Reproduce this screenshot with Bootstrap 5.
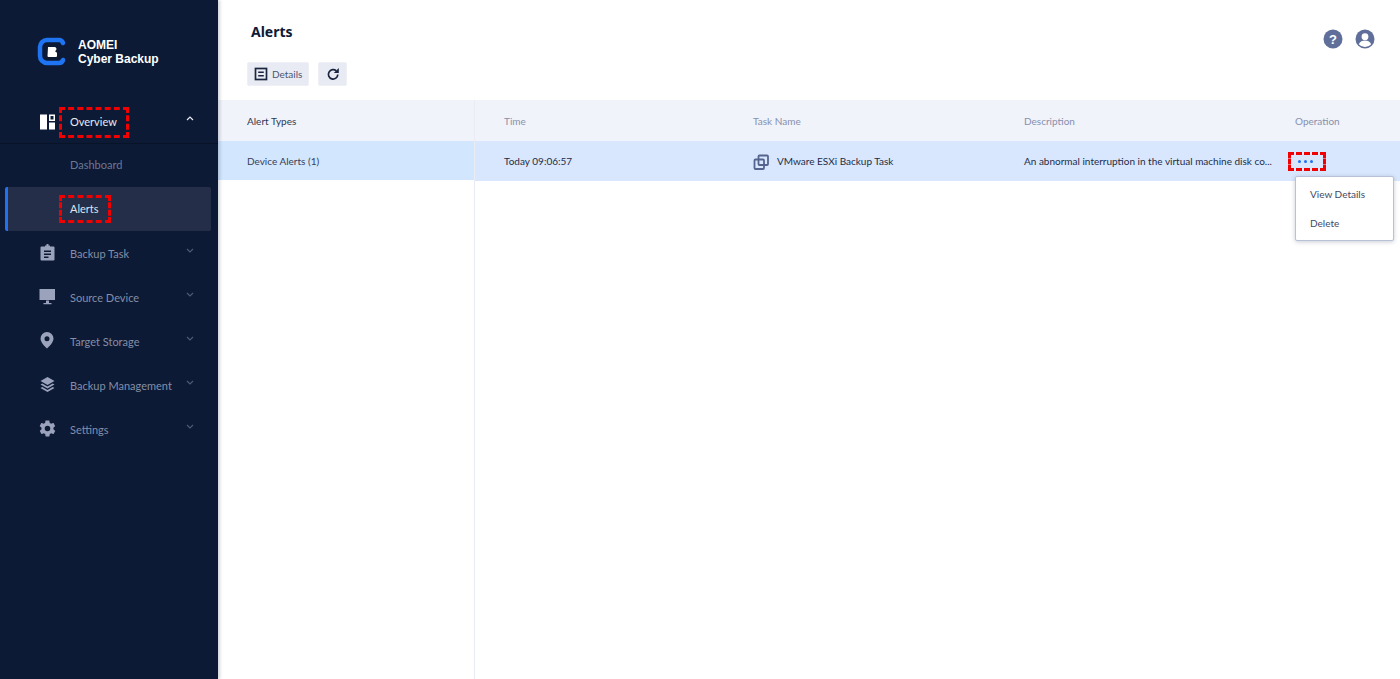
<!DOCTYPE html>
<html lang="en">
<head>
<meta charset="utf-8">
<title>Alerts</title>
<link href="https://cdn.jsdelivr.net/npm/bootstrap@5.3.0/dist/css/bootstrap.min.css" rel="stylesheet">
<style>
html,body{height:679px;overflow:hidden}
body{font-family:"Lato","Open Sans",sans-serif;font-size:11px;color:#1d2740;background:#fff}
.app-frame{height:679px}
.side-bar{width:218px;flex:none;background:#0c1a36;color:#858ea6;box-shadow:2px 0 3px rgba(12,26,54,.18);position:relative;z-index:2}
.brand-box{height:100px;padding:37px 0 0 37px;gap:12px}
.brand-text{font-family:"Liberation Sans",sans-serif;font-weight:700;font-size:12px;line-height:14px;color:#fff;padding-top:1px}
.nav-row{height:44px;padding:0 24px 0 40px;font-size:11px;color:#858ea6}
.nav-row>span{padding-top:2px}
.nav-row.is-open{height:43px;color:#e8ebf2;box-shadow:0 1px 0 rgba(0,0,0,.25)}
.nav-ico{width:15px;height:18px;flex:none;margin-right:15px;fill:#9aa3bb;overflow:visible}
.is-open .nav-ico{fill:#fff}
.nav-gear{width:19px;height:19px;margin:-2px 13px 0 -2px}
.nav-chev{width:8px;height:5px;fill:none;stroke:currentColor;stroke-width:1.2;position:relative;top:-3px;opacity:.55}
.is-open .nav-chev{opacity:1}
.sub-row{height:44px;padding-left:70px;padding-top:1px;color:#6f7890;font-size:11px}
.sub-row.is-current{margin:0 7px 0 5px;padding-left:62px;background:#252e48;color:#dfe3ec;border-left:3px solid #2272f0;border-radius:2px}
.mark-box{position:relative}
.mark-box::after{content:"";position:absolute;border:3px dashed #f00000;pointer-events:none}
.mk-over::after{left:-11px;right:-12px;top:-5px;bottom:-7px}
.mk-alerts::after{left:-11px;right:-12px;top:-6px;bottom:-5px}
.page-head{height:100px;padding:23px 26px 0 29px;position:relative}
.page-title{font-size:14px;font-weight:700;color:#0c1a36;line-height:17px;margin:0 0 0 4px;font-family:"Noto Sans",sans-serif}
.tool-row{margin-top:22px;gap:9px}
.tool-btn{height:24px;background:#e8ebf3;border:1px solid #eef0f6;border-radius:2px;color:#4b5572;font-size:10px;padding:0 6px;--bs-btn-hover-bg:#e8ebf3;gap:4px}
.tool-btn svg{width:14px;height:14px;flex:none}
.tool-sq{width:29px;justify-content:center}
.head-ico{position:absolute;top:29px;right:25px;gap:12px}
.head-ico svg{width:20px;height:20px;display:block}
.types-col{width:257px;flex:none;border-right:1px solid #e9ecf3}
.head-cell{height:41px;background:#f0f3fa;padding:2px 0 0 29px;color:#2f3750;font-size:10px}
.type-sel{height:39px;background:#d2e6fe;padding:2px 0 0 29px;color:#364059;font-size:10px}
.grid-head{height:41px;background:#f0f3fa;color:#8790ad;font-size:10px;padding-top:2px}
.grid-line{height:40px;background:#d8e7fd;color:#232c47;font-size:10px;position:relative;padding-top:1px}
.c-time{width:278px;padding-left:29px;flex:none}
.c-task{width:271px;flex:none}
.c-desc{width:271px;flex:none;white-space:nowrap}
.task-ico{width:16px;height:16px;margin-right:8px;flex:none}
.more-dots{gap:3px;margin-left:3px}
.more-dots i{width:3px;height:3px;border-radius:50%;background:#2272f0;display:block}
.mk-dots{width:30px;height:12px}
.mk-dots::after{left:-7px;right:-1px;top:-4px;bottom:-3px}
.op-menu{position:absolute;top:76px;left:820px;width:99px;height:65px;background:#fff;border:1px solid #b9c1d6;border-radius:2px;box-shadow:0 1px 4px rgba(40,55,90,.25);padding:3px 0;z-index:3;color:#3f4965;font-size:10px}
.op-menu div{height:29px;padding-left:14px;display:flex;align-items:center}
.body-wrap{min-height:0}
</style>
</head>
<body>
<div class="d-flex app-frame">
  <aside class="side-bar d-flex flex-column">
    <div class="brand-box d-flex align-items-start">
      <svg width="29" height="29" viewBox="0 0 29 29"><path d="M26 6Q25 3 22 3H10a7 7 0 0 0-7 7v9a7 7 0 0 0 7 7h12q3 0 4-3" fill="none" stroke="#1f74f2" stroke-width="4.500" stroke-linecap="round"/><path d="M11 10h6.500a2 2 0 0 1 1.500 3.300l-1 1 2 1.500v3.200a1 1 0 0 1-1 1h-7.500a1 1 0 0 1-1-1z" fill="#fff"/></svg>
      <div class="brand-text">AOMEI<br>Cyber Backup</div>
    </div>
    <div class="nav-row is-open d-flex align-items-center">
      <svg class="nav-ico" viewBox="0 0 15 15"><path d="M0 0h7v15H0zM9 8h6v7H9zM9 0h6v6.500H9zm1.500 1.500v3.500h3V1.500z" fill-rule="evenodd"/></svg>
      <span class="mark-box mk-over">Overview</span>
      <svg class="nav-chev ms-auto" viewBox="0 0 8 5"><path d="M1 4l3-3 3 3"/></svg>
    </div>
    <div class="sub-row d-flex align-items-center">Dashboard</div>
    <div class="sub-row is-current d-flex align-items-center"><span class="mark-box mk-alerts">Alerts</span></div>
    <div class="nav-row d-flex align-items-center">
      <svg class="nav-ico" viewBox="0 0 15 18"><path d="M1.500 2.500H5V1.500h1.500V0h2v1.500H10v1h3.500A1 1 0 0 1 14.500 3.500v12a1 1 0 0 1-1 1h-12a1 1 0 0 1-1-1v-12a1 1 0 0 1 1-1zM4 6.500V8h7V6.500zm0 3V11h7V9.500zm0 3V14h4.500v-1.500z" fill-rule="evenodd"/></svg>
      <span>Backup Task</span>
      <svg class="nav-chev ms-auto" viewBox="0 0 8 5"><path d="M1 1l3 3 3-3"/></svg>
    </div>
    <div class="nav-row d-flex align-items-center">
      <svg class="nav-ico" viewBox="0 0 15 18"><path d="M-.500 1h15.500v11H-.500zM6 12.500h3v2.500h2.500v1.300h-8V15H6z"/></svg>
      <span>Source Device</span>
      <svg class="nav-chev ms-auto" viewBox="0 0 8 5"><path d="M1 1l3 3 3-3"/></svg>
    </div>
    <div class="nav-row d-flex align-items-center">
      <svg class="nav-ico" viewBox="0 0 15 18"><path d="M7 0a6.500 6.500 0 0 1 6.500 6.500C13.500 11 7 16.500 7 16.500S.500 11 .500 6.500A6.500 6.500 0 0 1 7 0zm0 4.200a2.500 2.500 0 1 0 0 5 2.500 2.500 0 0 0 0-5z" fill-rule="evenodd"/></svg>
      <span>Target Storage</span>
      <svg class="nav-chev ms-auto" viewBox="0 0 8 5"><path d="M1 1l3 3 3-3"/></svg>
    </div>
    <div class="nav-row d-flex align-items-center">
      <svg class="nav-ico" viewBox="0 0 15 18"><path d="M7.500 1L14.500 5 7.500 9 .500 5zM2.300 7.500l5.200 3 5.200-3 1.800 1L7.500 12.500.500 8.500zM2.300 11l5.200 3 5.200-3 1.800 1L7.500 16 .500 12z"/></svg>
      <span>Backup Management</span>
      <svg class="nav-chev ms-auto" viewBox="0 0 8 5"><path d="M1 1l3 3 3-3"/></svg>
    </div>
    <div class="nav-row d-flex align-items-center">
      <svg class="nav-ico nav-gear" viewBox="0 0 24 24"><path d="M19.400 13c.04-.3.1-.7.1-1s0-.7-.1-1l2.100-1.700c.2-.1.2-.4.100-.6l-2-3.500c-.1-.2-.4-.3-.6-.2l-2.500 1c-.5-.4-1.100-.7-1.700-1L14.400 2.400c0-.2-.2-.4-.5-.4h-4c-.2 0-.5.200-.5.400L9 5c-.6.300-1.200.6-1.700 1l-2.500-1c-.2-.1-.5 0-.6.200l-2 3.500c-.1.200-.1.500.1.600L4.500 11c0 .3-.1.700-.1 1s0 .7.1 1l-2.100 1.700c-.2.100-.2.400-.1.600l2 3.500c.1.200.4.300.6.200l2.500-1c.5.400 1.100.7 1.700 1l.4 2.600c0 .2.2.4.5.4h4c.2 0 .5-.2.500-.4l.4-2.600c.6-.3 1.200-.6 1.700-1l2.500 1c.2.100.5 0 .6-.2l2-3.500c.1-.2.100-.5-.1-.6zM12 15.500a3.500 3.500 0 1 1 0-7 3.500 3.500 0 0 1 0 7z" fill-rule="evenodd"/></svg>
      <span>Settings</span>
      <svg class="nav-chev ms-auto" viewBox="0 0 8 5"><path d="M1 1l3 3 3-3"/></svg>
    </div>
  </aside>
  <main class="flex-grow-1 d-flex flex-column body-wrap">
    <header class="page-head">
      <h1 class="page-title">Alerts</h1>
      <div class="tool-row d-flex">
        <button class="btn tool-btn d-flex align-items-center" type="button">
          <svg viewBox="0 0 14 14"><rect x="1.500" y="1.500" width="11" height="11" fill="none" stroke="#1a2540" stroke-width="1.700"/><path d="M4.200 4.500h5.600v1.500H4.200zM4.200 8h5.600v1.500H4.200z" fill="#1a2540"/></svg>Details
        </button>
        <button class="btn tool-btn tool-sq d-flex align-items-center" type="button" aria-label="Refresh">
          <svg viewBox="0 0 14 14"><path d="M11.800 7.500a4.700 4.700 0 1 1-1.500-3.600" fill="none" stroke="#1a2540" stroke-width="1.700"/><path d="M12.800 1v5H7.800z" fill="#1a2540"/></svg>
        </button>
      </div>
      <div class="head-ico d-flex">
        <svg viewBox="0 0 20 20"><circle cx="10" cy="10" r="9.500" fill="#5f6f9a"/><text x="10" y="14.500" text-anchor="middle" font-size="13" font-weight="700" font-family="Liberation Sans, sans-serif" fill="#fff">?</text></svg>
        <svg viewBox="0 0 20 20"><circle cx="10" cy="10" r="9.500" fill="#5f6f9a"/><circle cx="10" cy="7.700" r="3.400" fill="#fff"/><path d="M3.800 15.200c1.200-2.600 3.600-3.700 6.200-3.700s5 1.100 6.200 3.700A8 8 0 0 1 10 18a8 8 0 0 1-6.200-2.800z" fill="#fff"/></svg>
      </div>
    </header>
    <section class="flex-grow-1 d-flex">
      <div class="types-col">
        <div class="head-cell d-flex align-items-center">Alert Types</div>
        <div class="type-sel d-flex align-items-center">Device Alerts (1)</div>
      </div>
      <div class="flex-grow-1 position-relative">
        <div class="grid-head d-flex align-items-center">
          <div class="c-time">Time</div><div class="c-task">Task Name</div><div class="c-desc">Description</div><div>Operation</div>
        </div>
        <div class="grid-line d-flex align-items-center">
          <div class="c-time">Today 09:06:57</div>
          <div class="c-task d-flex align-items-center">
            <svg class="task-ico" viewBox="0 0 16 16"><rect x="5.500" y="1.500" width="9.500" height="9.500" rx="1" fill="none" stroke="#55648f" stroke-width="1.800"/><rect x="1.500" y="5.500" width="9.500" height="9.500" rx="1" fill="none" stroke="#55648f" stroke-width="1.800"/></svg>
            <span>VMware ESXi Backup Task</span>
          </div>
          <div class="c-desc">An abnormal interruption in the virtual machine disk co...</div>
          <div class="mark-box mk-dots d-flex align-items-center"><div class="more-dots d-flex"><i></i><i></i><i></i></div></div>
        </div>
        <div class="op-menu">
          <div>View Details</div>
          <div>Delete</div>
        </div>
      </div>
    </section>
  </main>
</div>
<script src="https://cdn.jsdelivr.net/npm/bootstrap@5.3.0/dist/js/bootstrap.bundle.min.js"></script>
</body>
</html>
